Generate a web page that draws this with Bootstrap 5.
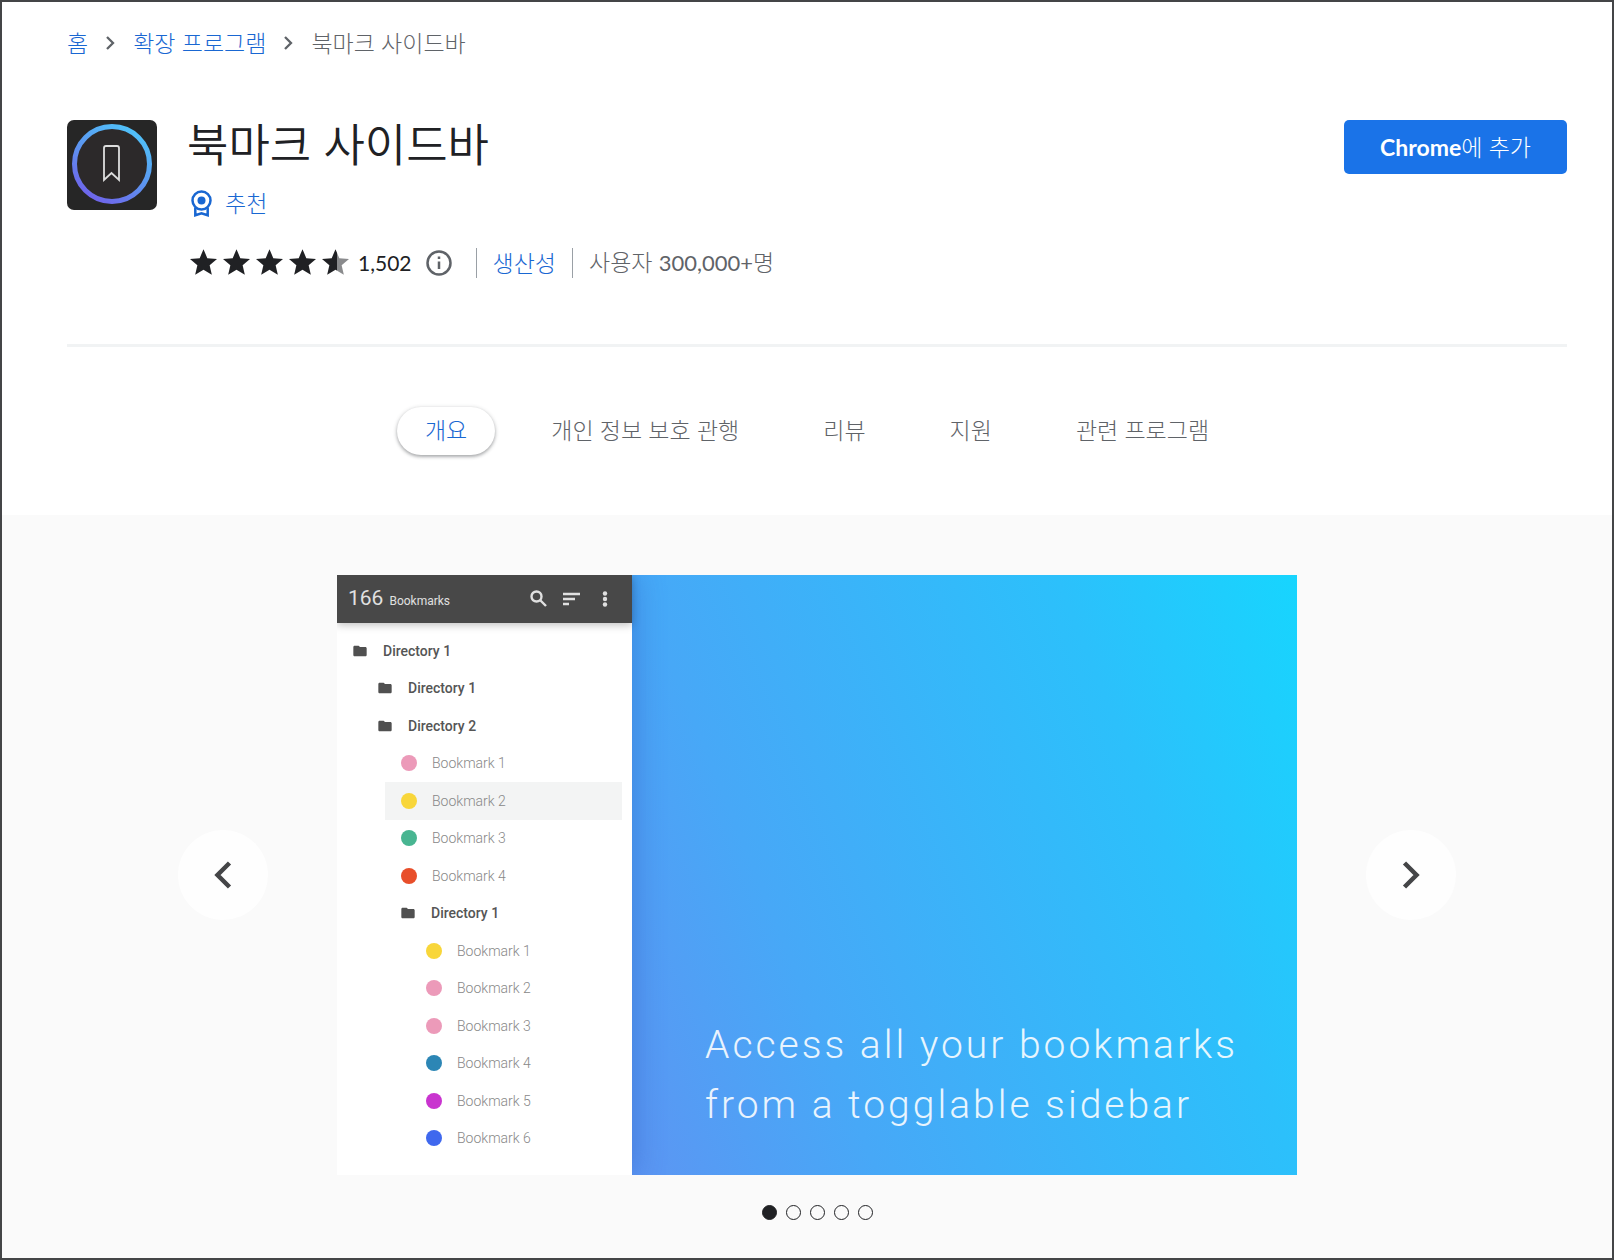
<!DOCTYPE html>
<html lang="ko">
<head>
<meta charset="utf-8">
<meta name="viewport" content="width=device-width, initial-scale=1">
<title>북마크 사이드바</title>
<link href="https://cdn.jsdelivr.net/npm/bootstrap@5.3.0/dist/css/bootstrap.min.css" rel="stylesheet">
<style>
body{font-family:Lato,"Noto Sans CJK KR",sans-serif;font-size:23px;line-height:30px;font-weight:300;color:#202124;background:#fff}
.page-frame{border:2px solid #444547;min-height:100vh}
.page-frame a{color:#1967d2;text-decoration:none}
.muted{color:#5f6368}
.inset{padding-left:65px;padding-right:45px}
.crumbs{padding-top:26px;gap:18px}
.item-head{margin-top:62px;padding-bottom:66px;border-bottom:3px solid #f1f3f4;gap:30px}
.item-title{font-size:45px;line-height:50px;font-weight:350}
.featured{gap:10px;margin-top:18px}
.stats{margin-top:29px}
.num{font-size:22px;font-weight:400}
.num.votes{font-size:21px}
.info{margin-left:14px}
.bar{width:1px;height:30px;background:#9aa0a6}
.btn-add{background:#1a73e8;color:#fff;font-size:23px;line-height:30px;padding:12px 36px;border:0;border-radius:5px;font-weight:300}
.btn-add:hover{background:#1967d2;color:#fff}
.tabs{margin-top:60px;padding-bottom:60px;gap:28px}
.tabs .nav-link{color:#5f6368;padding:8px 28px 10px;border-radius:24px;line-height:30px}
.tabs .nav-link.active{background:#fff;color:#1967d2;box-shadow:0 1px 4px rgba(60,64,67,.3),0 2px 3px rgba(60,64,67,.25)}
.gallery{background:#fafafa;padding-top:60px}
.viewer{gap:69px}
.btn-round{width:90px;height:90px;border-radius:50%;background:#fefefe;border:0}
.slide{flex:0 1 960px;height:600px;background:linear-gradient(68deg,#5f93f2 22%,#47a8f7 45%,#2cc0fb 80%,#17d5fe 100%)}
.side{width:295px;background:#fff;font-family:Roboto,sans-serif;font-size:14px;line-height:20px;box-shadow:2px 0 28px rgba(40,90,190,.45)}
.side-head{height:48px;background:#484848;color:#e0e0e0;padding:0 18px 0 11px;box-shadow:0 2px 8px rgba(0,0,0,.25);font-weight:400}
.count{gap:6px;font-size:12px}
.total{font-size:21px}
.side-icons{gap:14px}
.tree{padding:9px 10px 18px 0}
.tree li{flex:1;gap:15px;padding-left:12px;color:#888}
.lv-a{margin-left:0}.lv-b{margin-left:25px}.lv-c{margin-left:48px}.lv-d{margin-left:73px}
.tree li.dir{color:#555;font-weight:500}
.tree li.sel{background:#f3f4f4}
.dot{width:16px;height:16px;border-radius:50%;margin-left:4px;flex:none}
.tree svg{margin-left:3px;flex:none}
.slogan{font-family:Roboto,sans-serif;font-weight:300;font-size:39px;line-height:60px;letter-spacing:3px;color:#fff;opacity:.88;padding:0 0 40px 73px}
.pager{gap:9px;padding:30px 0 38px}
.pager button{width:15px;height:15px;border:1px solid #202124;border-radius:50%;background:none;padding:0}
.pager button.on{background:#202124}
</style>
<script src="https://cdn.jsdelivr.net/npm/bootstrap@5.3.0/dist/js/bootstrap.bundle.min.js"></script>
</head>
<body>
<svg class="d-none">
  <symbol id="folder" viewBox="0 0 24 24"><path d="M10 4H4c-1.100 0-2 .9-2 2v12c0 1.100.9 2 2 2h16c1.100 0 2-.9 2-2V8c0-1.100-.9-2-2-2h-8z"/></symbol>
  <symbol id="star" viewBox="2 2 20 19"><path d="M12 17.270L18.180 21l-1.640-7.030L22 9.240l-7.190-.61L12 2 9.190 8.630 2 9.240l5.460 4.730L5.820 21z"/></symbol>
</svg>
<div class="page-frame d-flex flex-column">
  <header class="inset">
    <nav class="crumbs d-flex align-items-center" aria-label="breadcrumb">
      <a href="#">홈</a>
      <svg width="9" height="14" viewBox="0 0 9 14" fill="none" stroke="#5f6368" stroke-width="2.300"><path d="M1 1l6 6-6 6"/></svg>
      <a href="#">확장 프로그램</a>
      <svg width="9" height="14" viewBox="0 0 9 14" fill="none" stroke="#5f6368" stroke-width="2.300"><path d="M1 1l6 6-6 6"/></svg>
      <span class="muted">북마크 사이드바</span>
    </nav>
    <div class="item-head d-flex align-items-start">
      <svg width="90" height="90" viewBox="0 0 90 90" class="flex-shrink-0">
        <defs><linearGradient id="ring" x1=".2" y1="1" x2=".8" y2="0"><stop offset="0" stop-color="#7060ea"/><stop offset=".5" stop-color="#5c96f0"/><stop offset="1" stop-color="#4fc5fa"/></linearGradient></defs>
        <rect width="90" height="90" rx="7" fill="#262626"/>
        <circle cx="45" cy="44" r="37.500" fill="#2c292a" stroke="url(#ring)" stroke-width="5"/>
        <path d="M37 60V28q0-2 2-2h11q2 0 2 2v32l-7.500-7z" fill="none" stroke="#ddd" stroke-width="1.800"/>
      </svg>
      <div class="flex-grow-1">
        <h1 class="item-title mb-0">북마크 사이드바</h1>
        <div class="featured d-flex align-items-center">
          <svg width="24" height="28" viewBox="0 0 24 28" fill="none" stroke="#1967d2" stroke-width="2.500" class="ms-1"><circle cx="10.500" cy="11.500" r="9"/><circle cx="10.500" cy="11.500" r="4" fill="#1967d2" stroke="none"/><path d="M4.300 19v7.200l6.200-2 6.200 2V19"/></svg>
          <a href="#">추천</a>
        </div>
        <div class="stats d-flex align-items-center">
          <span class="d-flex flex-shrink-0" role="img" aria-label="4.5">
            <svg width="167" height="27" viewBox="0 0 167 27" fill="#202124">
              <defs><linearGradient id="half"><stop offset=".55" stop-color="#202124"/><stop offset=".55" stop-color="#8a8b8d"/></linearGradient></defs>
              <use href="#star" x="3" width="27" height="26"/><use href="#star" x="36" width="27" height="26"/><use href="#star" x="69" width="27" height="26"/><use href="#star" x="102" width="27" height="26"/><use href="#star" x="135" width="27" height="26" fill="url(#half)"/>
            </svg>
          </span>
          <span class="num votes ms-1">1,502</span>
          <svg width="26" height="26" viewBox="0 0 26 26" fill="none" stroke="#5f6368" stroke-width="2.500" class="info"><circle cx="13" cy="13" r="11.500"/><path d="M13 11.500v7.500M13 6.500v2.500"/></svg>
          <span class="bar ms-4"></span>
          <a href="#" class="mx-3">생산성</a>
          <span class="bar"></span>
          <span class="muted ms-3">사용자 <span class="num">300,000+</span>명</span>
        </div>
      </div>
      <button type="button" class="btn btn-add flex-shrink-0"><span class="fw-bold">Chrome</span>에 추가</button>
    </div>
    <ul class="tabs nav nav-pills justify-content-center">
      <li class="nav-item"><a class="nav-link active" href="#">개요</a></li>
      <li class="nav-item"><a class="nav-link" href="#">개인 정보 보호 관행</a></li>
      <li class="nav-item"><a class="nav-link" href="#">리뷰</a></li>
      <li class="nav-item"><a class="nav-link" href="#">지원</a></li>
      <li class="nav-item"><a class="nav-link" href="#">관련 프로그램</a></li>
    </ul>
  </header>
  <main class="gallery inset flex-grow-1">
    <div class="viewer d-flex align-items-center justify-content-center">
      <button type="button" class="btn-round flex-shrink-0" aria-label="이전"><svg class="d-block mx-auto" width="18" height="28" viewBox="0 0 18 28" fill="none" stroke="#444547" stroke-width="4.500"><path d="M15.500 2L3.500 14l12 12"/></svg></button>
      <div class="slide d-flex overflow-hidden">
        <div class="side d-flex flex-column flex-shrink-0">
          <div class="side-head d-flex align-items-center">
            <div class="count flex-grow-1 d-flex align-items-baseline"><span class="total">166</span><span>Bookmarks</span></div>
            <div class="side-icons d-flex align-items-center">
              <svg width="18" height="18" viewBox="0 0 18 18" fill="none" stroke="#e0e0e0" stroke-width="2.400"><circle cx="6.500" cy="6.500" r="5"/><path d="M10 10l6 6"/></svg>
              <svg width="20" height="18" viewBox="0 0 20 18" stroke="#e0e0e0" stroke-width="2.400"><path d="M1 4h17M1 9h12M1 14h6"/></svg>
              <svg width="18" height="18" viewBox="0 0 18 18" fill="#e0e0e0"><circle cx="9" cy="3.500" r="2.200"/><circle cx="9" cy="9" r="2.200"/><circle cx="9" cy="14.500" r="2.200"/></svg>
            </div>
          </div>
          <ul class="tree list-unstyled mb-0 d-flex flex-column flex-grow-1">
            <li class="dir lv-a d-flex align-items-center"><svg width="16" height="16" fill="#505050"><use href="#folder"/></svg>Directory 1</li>
            <li class="dir lv-b d-flex align-items-center"><svg width="16" height="16" fill="#505050"><use href="#folder"/></svg>Directory 1</li>
            <li class="dir lv-b d-flex align-items-center"><svg width="16" height="16" fill="#505050"><use href="#folder"/></svg>Directory 2</li>
            <li class="lv-c d-flex align-items-center"><span class="dot" style="background:#ec9ab9"></span>Bookmark 1</li>
            <li class="lv-c sel d-flex align-items-center"><span class="dot" style="background:#f8d63a"></span>Bookmark 2</li>
            <li class="lv-c d-flex align-items-center"><span class="dot" style="background:#48b591"></span>Bookmark 3</li>
            <li class="lv-c d-flex align-items-center"><span class="dot" style="background:#e84e2a"></span>Bookmark 4</li>
            <li class="dir lv-c d-flex align-items-center"><svg width="16" height="16" fill="#505050"><use href="#folder"/></svg>Directory 1</li>
            <li class="lv-d d-flex align-items-center"><span class="dot" style="background:#f8d63a"></span>Bookmark 1</li>
            <li class="lv-d d-flex align-items-center"><span class="dot" style="background:#ec9ab9"></span>Bookmark 2</li>
            <li class="lv-d d-flex align-items-center"><span class="dot" style="background:#ec9ab9"></span>Bookmark 3</li>
            <li class="lv-d d-flex align-items-center"><span class="dot" style="background:#2c86b5"></span>Bookmark 4</li>
            <li class="lv-d d-flex align-items-center"><span class="dot" style="background:#c934cf"></span>Bookmark 5</li>
            <li class="lv-d d-flex align-items-center"><span class="dot" style="background:#3f68ee"></span>Bookmark 6</li>
          </ul>
        </div>
        <div class="slogan align-self-end text-nowrap">Access all your bookmarks<br>from a togglable sidebar</div>
      </div>
      <button type="button" class="btn-round flex-shrink-0" aria-label="다음"><svg class="d-block mx-auto" width="18" height="28" viewBox="0 0 18 28" fill="none" stroke="#444547" stroke-width="4.500"><path d="M2.500 2l12 12-12 12"/></svg></button>
    </div>
    <div class="pager d-flex justify-content-center">
      <button type="button" class="on" aria-label="1"></button><button type="button" aria-label="2"></button><button type="button" aria-label="3"></button><button type="button" aria-label="4"></button><button type="button" aria-label="5"></button>
    </div>
  </main>
</div>
</body>
</html>
